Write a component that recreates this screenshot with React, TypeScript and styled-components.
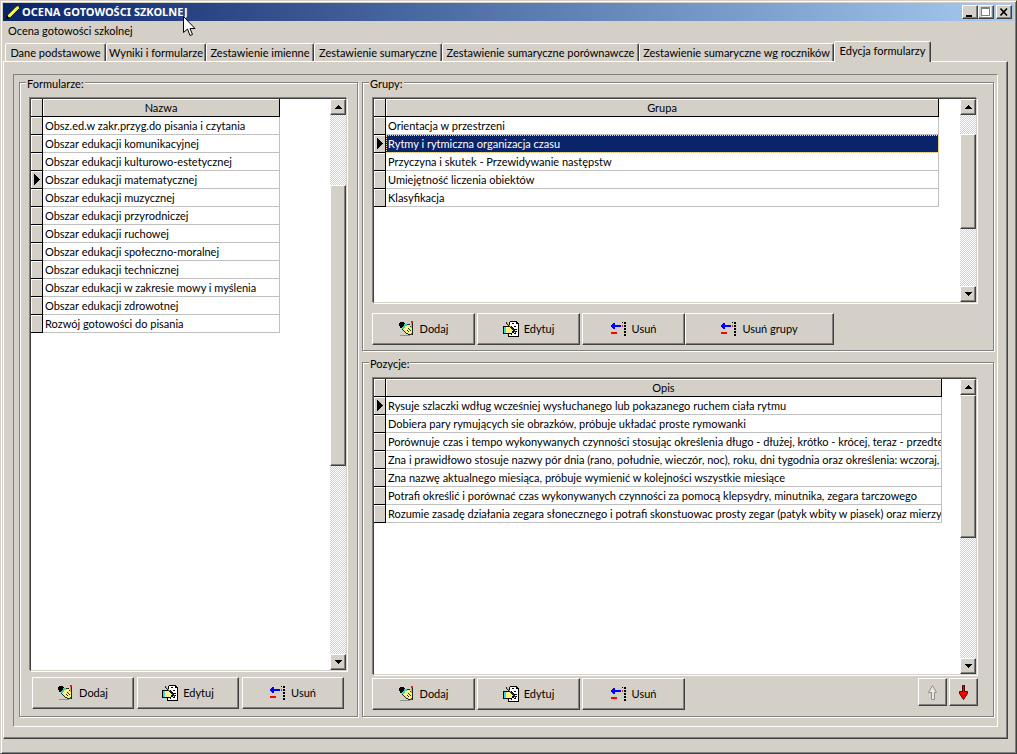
import React, { useState } from "react";
import styled, { createGlobalStyle, css } from "styled-components";

const face = "#d4d0c8";
const shade = "#808080";
const dark = "#404040";

const GlobalStyle = createGlobalStyle`
  *, *::before, *::after { box-sizing: border-box; }
  body { margin: 0; background: ${face}; }
  body, button { font: 11px/14px Lato, "Liberation Sans", Arial, sans-serif; color: #000; }
`;

const raised = css`
  border: 1px solid;
  border-color: #fff ${dark} ${dark} #fff;
  box-shadow: inset -1px -1px ${shade};
  background: ${face};
`;

const Window = styled.div`
  display: flex;
  flex-direction: column;
  min-height: 100vh;
  padding: 1px 1px 14px;
  border: 1px solid;
  border-color: ${face} ${dark} ${dark} ${face};
  box-shadow: inset 1px 1px #fff, inset -1px -1px ${shade};
  background: ${face};
`;

const TitleBar = styled.header`
  display: flex;
  align-items: center;
  height: 18px;
  margin: 1px 1px 0;
  padding: 0 2px;
  background: linear-gradient(90deg, #0a246a, #a6caf0);
  color: #fff;
`;

const Title = styled.h1`
  flex: 1;
  margin: 0 0 0 1px;
  font: bold 11px/16px "Noto Sans", "Open Sans", sans-serif;
  white-space: nowrap;
`;

const Controls = styled.div`
  display: flex;
`;

const ControlButton = styled.button<{ $apart?: boolean }>`
  ${raised}
  display: grid;
  place-items: center;
  width: 16px;
  height: 14px;
  padding: 0;
  margin-left: ${(p) => (p.$apart ? 2 : 0)}px;
`;

const MenuBar = styled.nav`
  display: flex;
  height: 20px;
  padding: 0 1px;
`;

const MenuItem = styled.button`
  padding: 0 5px;
  border: 0;
  background: none;
`;

const TabList = styled.div`
  display: flex;
  align-items: flex-end;
  height: 21px;
  margin: 0 0 -1px 3px;
`;

const Tab = styled.button<{ $width: number; $active: boolean }>`
  flex: 0 1 ${(p) => p.$width}px;
  height: ${(p) => (p.$active ? 21 : 18)}px;
  margin-bottom: ${(p) => (p.$active ? 0 : 1)}px;
  padding: 0 0 ${(p) => (p.$active ? 2 : 0)}px;
  overflow: hidden;
  white-space: nowrap;
  border: 1px solid;
  border-color: #fff ${dark} transparent #fff;
  border-bottom-width: 0;
  border-radius: 2px 2px 0 0;
  box-shadow: inset -1px 0 ${shade};
  background: ${face};
  z-index: ${(p) => (p.$active ? 1 : 0)};
`;

const TabPage = styled.main`
  flex: 1;
  display: flex;
  margin: 0 7px 0 1px;
  padding: 12px 9px 11px 9px;
  border: 1px solid;
  border-color: #fff ${dark} ${dark} #fff;
  box-shadow: inset -1px -1px ${shade};
`;

const Panel = styled.div`
  flex: 1;
  display: grid;
  grid-template-columns: 339px minmax(0, 1fr);
  gap: 4px;
  padding: 7px 3px 9px 5px;
  border: 1px solid;
  border-color: ${shade} #fff #fff ${shade};
`;

const RightColumn = styled.div`
  display: grid;
  grid-template-rows: 269fr 354fr;
  gap: 11px;
`;

const Group = styled.section<{ $wide?: boolean; $bottom: number }>`
  position: relative;
  display: flex;
  flex-direction: column;
  min-width: 0;
  padding: 14px ${(p) => (p.$wide ? 15 : 9)}px ${(p) => p.$bottom}px 9px;
  border: 1px solid ${shade};
  box-shadow: inset 1px 1px #fff, 1px 1px #fff;
`;

const GroupTitle = styled.h2`
  position: absolute;
  top: -6px;
  left: 6px;
  margin: 0;
  padding: 0 1px;
  font: inherit;
  background: ${face};
`;

const Grid = styled.div`
  flex: 1;
  display: flex;
  margin: 1px;
  border: 1px solid;
  border-color: ${dark} ${face} ${face} ${dark};
  box-shadow: -1px -1px ${shade}, 1px 1px #fff;
  background: #fff;
`;

const GridBody = styled.div<{ $rest: number }>`
  flex: 1;
  min-width: 0;
  padding-right: ${(p) => p.$rest}px;
`;

const Table = styled.table`
  width: 100%;
  table-layout: fixed;
  border-collapse: separate;
  border-spacing: 0;
`;

const headCell = css`
  height: 18px;
  padding: 0;
  border: solid #000;
  border-width: 0 1px 1px 0;
  box-shadow: inset 1px 1px #fff;
  background: ${face};
`;

const Corner = styled.td`
  ${headCell}
  width: 12px;
`;

const ColumnHead = styled.th`
  ${headCell}
  font-weight: normal;
  line-height: 16px;
`;

const Marker = styled.td`
  ${headCell}
  svg { display: block; margin-left: 3px; }
`;

const Cell = styled.td<{ $selected: boolean }>`
  height: 18px;
  padding: 0 0 0 2px;
  overflow: hidden;
  white-space: nowrap;
  line-height: 16px;
  border: solid #c0c0c0;
  border-width: 0 1px 1px 0;
  ${(p) =>
    p.$selected &&
    css`
      color: #fff;
      background: #0a246a;
      outline: 1px dotted #f5db95;
      outline-offset: -1px;
    `}
`;

const Bar = styled.div`
  flex: none;
  display: flex;
  flex-direction: column;
  width: 16px;
  background: repeating-conic-gradient(#fff 0 25%, ${face} 0 50%) 0 0 / 2px 2px;
`;

const ArrowButton = styled.button`
  ${raised}
  display: grid;
  place-items: center;
  flex: none;
  height: 16px;
  padding: 0;
`;

const Thumb = styled.div<{ $size: number }>`
  ${raised}
  flex: ${(p) => p.$size} 0 0;
`;

const Track = styled.div<{ $size: number }>`
  flex: ${(p) => p.$size} 0 0;
`;

const Actions = styled.div<{ $top: number; $left?: number; $gap: number }>`
  display: flex;
  gap: ${(p) => p.$gap}px;
  margin: ${(p) => p.$top}px 0 0 ${(p) => p.$left ?? 0}px;
`;

const ActionButton = styled.button<{ $width: number; $joined?: boolean }>`
  ${raised}
  display: flex;
  align-items: center;
  justify-content: center;
  gap: 5px;
  width: ${(p) => p.$width}px;
  height: 32px;
  margin-left: ${(p) => (p.$joined ? -2 : 0)}px;
  padding: 0;
`;

const Pair = styled.div`
  display: flex;
  gap: 2px;
  margin-left: auto;
`;

const MoveButton = styled.button`
  ${raised}
  display: grid;
  place-items: center;
  width: 29px;
  height: 28px;
  padding: 0;
`;

const Pointer = styled.svg`
  position: absolute;
  top: 16px;
  left: 183px;
  pointer-events: none;
`;

const Pencil = () => (
  <svg width="16" height="16" aria-hidden="true">
    <path d="M1.5 14.5L2.5 11L11.5 2L13 1.5L14.5 3V4.5L5.5 13.5Z" fill="#f4ee20" stroke="#111" />
    <path d="M4 11.5L11.5 4" stroke="#ffffb0" />
    <path d="M1 15L2 11.5L4.5 14Z" fill="#000" />
  </svg>
);

const AddIcon = () => (
  <svg width="16" height="16" shapeRendering="crispEdges" aria-hidden="true">
    <path d="M1 1H5V2H6V4H5V5H4V6H3V7H1V5H0V2H1Z" fill="#000" />
    <path d="M5 3H8V5H6V7H5V8H3V6H4V5H5Z" fill="#40d0b0" />
    <path d="M6 5H8V4H12V6H13V13H10V12H7V10H5V9H4V8H5V7H6Z" fill="#f8f480" />
    <path d="M8 3H11V4H8ZM3 8H4V9H3ZM4 9H5V10H4ZM5 10H6V11H5ZM6 11H7V12H6ZM7 12H9V13H7ZM9 13H12V14H9ZM9 7H10V8H9ZM10 8H11V9H10ZM8 9H9V10H8ZM11 9H12V10H11ZM9 10H10V11H9ZM11 5H12V6H11Z" fill="#222" />
    <path d="M12 0H14V2H12Z" fill="#e02020" />
    <path d="M12 2H13V7H12Z" fill="#e8a020" />
    <path d="M13 2H14V14H13Z" fill="#202020" />
    <path d="M12 12H13V14H12Z" fill="#208030" />
    <path d="M1 14H11V15H1Z" fill="#909090" />
  </svg>
);

const EditIcon = () => (
  <svg width="16" height="16" shapeRendering="crispEdges" aria-hidden="true">
    <path d="M7 0H14V1H15V2H16V16H5V12H6V1H7Z" fill="#000" />
    <path d="M7 1H13V3H15V15H6V12H7Z" fill="#fff" />
    <path d="M9 2H11V3H9ZM11 5H13V6H11ZM12 8H14V9H12ZM11 12H13V13H11ZM8 13H9V14H8ZM13 10H14V11H13Z" fill="#000" />
    <path d="M2 5H5V4H7V5H9V6H10V7H11V8H12V10H11V12H9V13H2Z" fill="#000" />
    <path d="M3 6H6V5H7V6H9V7H10V9H11V10H9V12H3Z" fill="#f8f480" />
    <path d="M0 5H2V13H0Z" fill="#000" />
    <path d="M1 6H3V12H1Z" fill="#30e0e0" />
    <path d="M3 1H4V2H5V3H6V4H7V5H8V6H9V7H10V8H11V9H12V10H13V12H12V11H11V10H10V9H9V8H8V7H7V6H6V5H5V4H4V3H3Z" fill="#222" />
    <path d="M4 2H5V3H6V4H7V5H8V6H7V5H6V4H5V3H4Z" fill="#d8a030" />
  </svg>
);

const RemoveIcon = () => (
  <svg width="16" height="15" shapeRendering="crispEdges" aria-hidden="true">
    <path d="M0 3H1V2H2V1H4V3H10V5H4V7H2V6H1V5H0Z" fill="#00f" />
    <path d="M0 10H6V12H0Z" fill="#f00" />
    <path d="M11 3H12V5H11Z" fill="#c03030" />
    <path d="M13 0H15V2H13ZM13 3H15V5H13ZM13 6H15V8H13ZM13 9H15V11H13ZM13 12H15V14H13ZM11 0H12V1H11Z" fill="#000" />
  </svg>
);

const Triangle = ({ up }: { up?: boolean }) => (
  <svg width="7" height="4" shapeRendering="crispEdges" aria-hidden="true">
    <path d={up ? "M3 0H4V1H5V2H6V3H7V4H0V3H1V2H2V1H3Z" : "M0 0H7V1H6V2H5V3H4V4H3V3H2V2H1V1H0Z"} />
  </svg>
);

const RowPointer = () => (
  <svg width="6" height="11" shapeRendering="crispEdges" aria-hidden="true">
    <path d="M0 0H1V1H2V2H3V3H4V4H5V5H6V6H5V7H4V8H3V9H2V10H1V11H0Z" />
  </svg>
);

const VerticalArrow = ({ up }: { up?: boolean }) => (
  <svg width="11" height="17" aria-hidden="true">
    {up ? (
      <path d="M5.5 1.5L9.5 8.5H7.5V15.5H4.5V8.5H1.5Z" fill="#e8e6e0" stroke="#909090" />
    ) : (
      <path d="M4.5 1.5H6.5V7.5H9.5V9.5L5.5 15.5L1.5 9.5V7.5H4.5Z" fill="#f00" stroke="#500" />
    )}
  </svg>
);

interface ScrollProps {
  before: number;
  thumb: number;
  after: number;
}

const ScrollBar = ({ before, thumb, after }: ScrollProps) => (
  <Bar>
    <ArrowButton aria-label="Przewiń w górę"><Triangle up /></ArrowButton>
    <Track $size={before} />
    <Thumb $size={thumb} />
    <Track $size={after} />
    <ArrowButton aria-label="Przewiń w dół"><Triangle /></ArrowButton>
  </Bar>
);

interface DataGridProps {
  column: string;
  rows: string[];
  start: number;
  highlight?: boolean;
  rest: number;
  scroll: ScrollProps;
}

const DataGrid = ({ column, rows, start, highlight, rest, scroll }: DataGridProps) => {
  const [current, setCurrent] = useState(start);
  return (
    <Grid>
      <GridBody $rest={rest}>
        <Table>
          <thead>
            <tr>
              <Corner />
              <ColumnHead scope="col">{column}</ColumnHead>
            </tr>
          </thead>
          <tbody>
            {rows.map((row, i) => (
              <tr key={row} onClick={() => setCurrent(i)}>
                <Marker>{i === current && <RowPointer />}</Marker>
                <Cell $selected={!!highlight && i === current}>{row}</Cell>
              </tr>
            ))}
          </tbody>
        </Table>
      </GridBody>
      <ScrollBar {...scroll} />
    </Grid>
  );
};

const StandardActions = ({ width }: { width: number }) => (
  <>
    <ActionButton $width={width}><AddIcon />Dodaj</ActionButton>
    <ActionButton $width={width}><EditIcon />Edytuj</ActionButton>
    <ActionButton $width={width}><RemoveIcon />Usuń</ActionButton>
  </>
);

const tabs: [string, number][] = [
  ["Dane podstawowe", 101],
  ["Wyniki i formularze", 100],
  ["Zestawienie imienne", 108],
  ["Zestawienie sumaryczne", 128],
  ["Zestawienie sumaryczne porównawcze", 197],
  ["Zestawienie sumaryczne wg roczników", 195],
  ["Edycja formularzy", 97],
];

const forms = [
  "Obsz.ed.w zakr.przyg.do pisania i czytania",
  "Obszar edukacji komunikacyjnej",
  "Obszar edukacji kulturowo-estetycznej",
  "Obszar edukacji matematycznej",
  "Obszar edukacji muzycznej",
  "Obszar edukacji przyrodniczej",
  "Obszar edukacji ruchowej",
  "Obszar edukacji społeczno-moralnej",
  "Obszar edukacji technicznej",
  "Obszar edukacji w zakresie mowy i myślenia",
  "Obszar edukacji zdrowotnej",
  "Rozwój gotowości do pisania",
];

const groups = [
  "Orientacja w przestrzeni",
  "Rytmy i rytmiczna organizacja czasu",
  "Przyczyna i skutek - Przewidywanie następstw",
  "Umiejętność liczenia obiektów",
  "Klasyfikacja",
];

const items = [
  "Rysuje szlaczki wdług wcześniej wysłuchanego lub pokazanego ruchem ciała rytmu",
  "Dobiera pary rymujących sie obrazków, próbuje układać proste rymowanki",
  "Porównuje czas i tempo wykonywanych czynności stosując określenia długo - dłużej, krótko - krócej, teraz - przedtem",
  "Zna i prawidłowo stosuje nazwy pór dnia (rano, południe, wieczór, noc), roku, dni tygodnia oraz określenia: wczoraj, d",
  "Zna nazwę aktualnego miesiąca, próbuje wymienić w kolejności wszystkie miesiące",
  "Potrafi określić i porównać czas wykonywanych czynności za pomocą klepsydry, minutnika, zegara tarczowego",
  "Rozumie zasadę działania zegara słonecznego i potrafi skonstuowac prosty zegar (patyk wbity w piasek) oraz mierzyć",
];

export default function App() {
  return (
    <Window>
      <GlobalStyle />
      <TitleBar>
        <Pencil />
        <Title>OCENA GOTOWOŚCI SZKOLNEJ</Title>
        <Controls>
          <ControlButton aria-label="Minimalizuj">
            <svg width="10" height="9" shapeRendering="crispEdges"><path d="M1 7H7V9H1Z" /></svg>
          </ControlButton>
          <ControlButton aria-label="Maksymalizuj" disabled>
            <svg width="10" height="10" shapeRendering="crispEdges">
              <path d="M1 0H10V10H1Z" fill="#fff" />
              <path d="M0 0H9V9H0ZM1 2V8H8V2Z" fill={shade} fillRule="evenodd" />
            </svg>
          </ControlButton>
          <ControlButton aria-label="Zamknij" $apart>
            <svg width="8" height="8"><path d="M0.5 0.5L7 7.5M7 0.5L0.5 7.5" stroke="#000" strokeWidth="1.6" /></svg>
          </ControlButton>
        </Controls>
      </TitleBar>
      <MenuBar>
        <MenuItem>Ocena gotowości szkolnej</MenuItem>
      </MenuBar>
      <TabList role="tablist">
        {tabs.map(([label, width], i) => (
          <Tab key={label} role="tab" aria-selected={i === 6} $active={i === 6} $width={width}>
            {label}
          </Tab>
        ))}
      </TabList>
      <TabPage>
        <Panel>
          <Group $bottom={7} aria-labelledby="forms">
            <GroupTitle id="forms">Formularze:</GroupTitle>
            <DataGrid column="Nazwa" rows={forms} start={3} rest={50} scroll={{ before: 70, thumb: 279, after: 188 }} />
            <Actions $top={5} $left={3} $gap={3}>
              <StandardActions width={102} />
            </Actions>
          </Group>
          <RightColumn>
            <Group $wide $bottom={5} aria-labelledby="groups">
              <GroupTitle id="groups">Grupy:</GroupTitle>
              <DataGrid column="Grupa" rows={groups} start={1} highlight rest={21} scroll={{ before: 19, thumb: 93, after: 57 }} />
              <Actions $top={9} $gap={2}>
                <StandardActions width={103} />
                <ActionButton $width={149} $joined><RemoveIcon />Usuń grupy</ActionButton>
              </Actions>
            </Group>
            <Group $wide $bottom={6} aria-labelledby="items">
              <GroupTitle id="items">Pozycje:</GroupTitle>
              <DataGrid column="Opis" rows={items} start={0} rest={18} scroll={{ before: 0, thumb: 141, after: 120 }} />
              <Actions $top={2} $gap={2}>
                <StandardActions width={103} />
                <Pair>
                  <MoveButton aria-label="Przesuń w górę" disabled><VerticalArrow up /></MoveButton>
                  <MoveButton aria-label="Przesuń w dół"><VerticalArrow /></MoveButton>
                </Pair>
              </Actions>
            </Group>
          </RightColumn>
        </Panel>
      </TabPage>
      <Pointer width="13" height="21" aria-hidden="true">
        <path d="M0.5 0.5V16.5L4.5 13L7 19.5L9.5 18.5L7 12.5H12Z" fill="#fff" stroke="#000" />
      </Pointer>
    </Window>
  );
}
